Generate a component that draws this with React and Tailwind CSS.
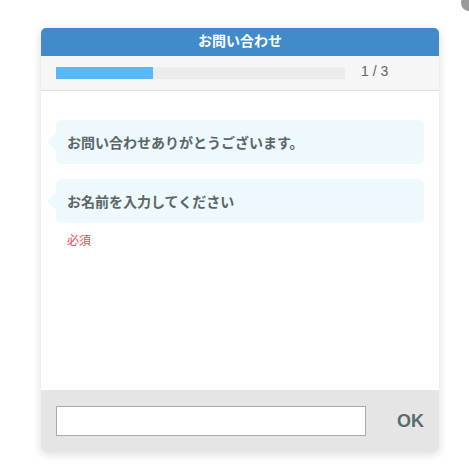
import React from 'react';

const font = { fontFamily: '"Noto Sans CJK JP", "Noto Sans", sans-serif' };

const Bubble = ({ children }) => (
    <div className="relative ml-[15px] mr-[15px] rounded-[6px] bg-[#eef9fd] h-[44px] flex items-center pl-[11px]">
        <span className="absolute left-[-9px] top-1/2 -translate-y-1/2 w-0 h-0 border-y-[9px] border-y-transparent border-r-[9px] border-r-[#eef9fd]" />
        <span className="text-[14px] font-bold text-[#5b6565]">{children}</span>
    </div>
);

const App = () => {
    return (
        <div className="relative w-[469px] h-[466px] bg-white overflow-hidden" style={font}>
            <div className="absolute right-[-8px] top-[-5px] w-[16px] h-[16px] rounded-full bg-[#9a9a9a]" />

            <div className="ml-[41px] pt-[28px] w-[398px]">
                <div className="flex flex-col h-[424px] rounded-[5px] shadow-[0_2px_10px_rgba(0,0,0,0.15)]">
                    <div className="h-[28px] bg-[#418bcb] rounded-t-[5px] text-center text-white font-bold text-[14px] leading-[24px]">
                        お問い合わせ
                    </div>

                    <div className="h-[35px] bg-[#f6f6f6] border-b border-[#dddddd] flex items-start pl-[15px]">
                        <div className="mt-[11px] w-[289px] h-[12px] bg-[#ececec]">
                            <div className="w-[97px] h-full bg-[#58b8fe]" />
                        </div>
                        <span className="ml-[16px] mt-[7px] text-[14px] text-[#5b6565] leading-[16px] font-['Liberation_Sans',Arial,sans-serif]">1 / 3</span>
                    </div>

                    <div className="flex-1 bg-white pt-[29px] flex flex-col gap-[15px]">
                        <Bubble>お問い合わせありがとうございます。</Bubble>
                        <div>
                            <Bubble>お名前を入力してください</Bubble>
                            <div className="pl-[26px] pt-[9px] text-[12px] text-[#f4474f] leading-[16px]">必須</div>
                        </div>
                    </div>

                    <div className="h-[62px] bg-[#e5e5e5] rounded-b-[5px] flex items-center pl-[15px] pr-[15px]">
                        <input className="w-[310px] h-[30px] bg-white border border-[#aaaaaa] outline-none" />
                        <span className="ml-auto text-[18px] font-bold text-[#5a6b6b] font-['Liberation_Sans',Arial,sans-serif]">OK</span>
                    </div>
                </div>
            </div>
        </div>
    );
};

export default App;
